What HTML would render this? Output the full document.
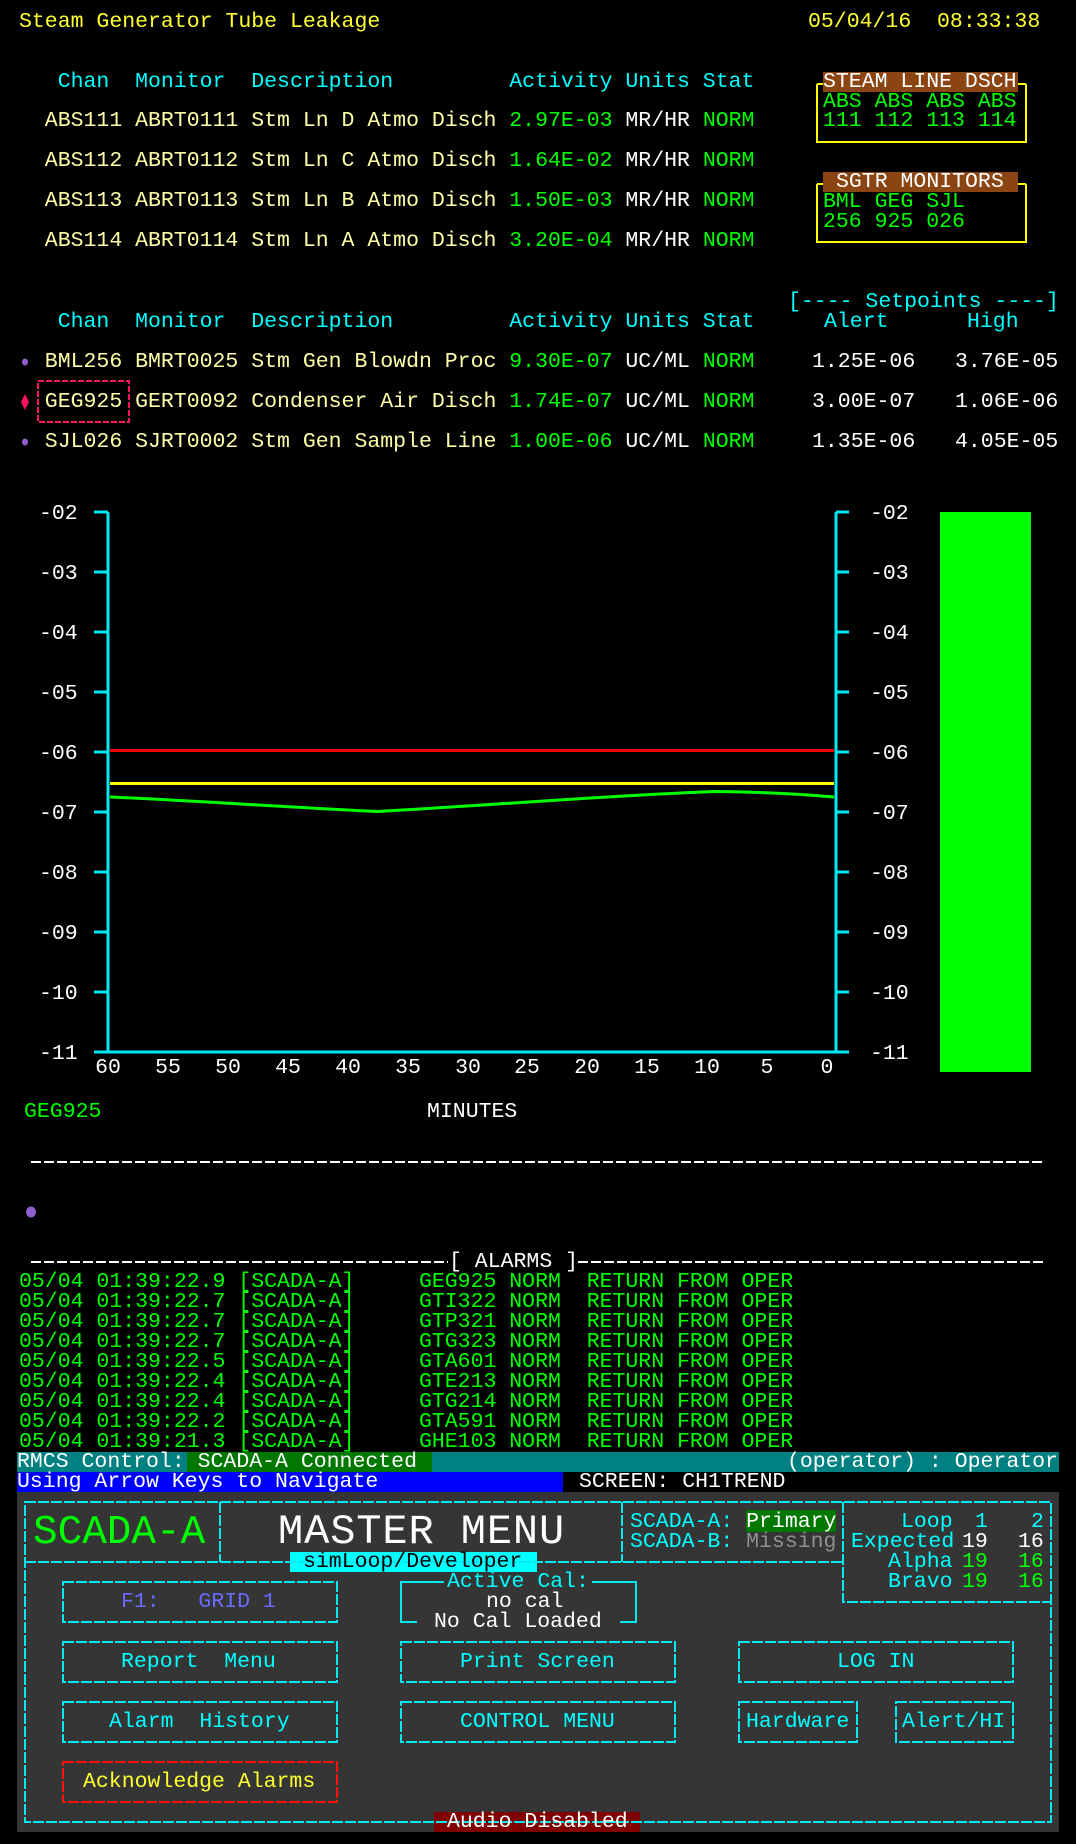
<!DOCTYPE html>
<html><head><meta charset="utf-8"><style>
html,body{margin:0;padding:0;background:#000;}
body{width:1076px;height:1844px;position:relative;overflow:hidden;font-family:"Liberation Mono","DejaVu Sans Mono",monospace;}
.t{position:absolute;white-space:pre;font-size:21.5px;line-height:20px;height:20px;}
.y{color:#ffff30}.py{color:#ffffa8}.c{color:#00ffff}.g{color:#00ff00}.w{color:#ffffff}
svg{position:absolute;left:0;top:0;}
</style></head><body>
<div class="t y" style="left:19px;top:12px">Steam Generator Tube Leakage</div>
<div class="t y" style="left:808px;top:12px">05/04/16  08:33:38</div>

<div class="t c" style="left:19px;top:72px">   Chan  Monitor  Description         Activity Units Stat</div>
<div class="t" style="left:19px;top:111px"><span class="py">  ABS111 ABRT0111 Stm Ln D Atmo Disch </span><span class="g">2.97E-03 </span><span class="w">MR/HR </span><span class="g">NORM</span></div>
<div class="t" style="left:19px;top:151px"><span class="py">  ABS112 ABRT0112 Stm Ln C Atmo Disch </span><span class="g">1.64E-02 </span><span class="w">MR/HR </span><span class="g">NORM</span></div>
<div class="t" style="left:19px;top:191px"><span class="py">  ABS113 ABRT0113 Stm Ln B Atmo Disch </span><span class="g">1.50E-03 </span><span class="w">MR/HR </span><span class="g">NORM</span></div>
<div class="t" style="left:19px;top:231px"><span class="py">  ABS114 ABRT0114 Stm Ln A Atmo Disch </span><span class="g">3.20E-04 </span><span class="w">MR/HR </span><span class="g">NORM</span></div>

<div class="t c" style="left:788px;top:292px">[---- Setpoints ----]</div>
<div class="t c" style="left:19px;top:312px">   Chan  Monitor  Description         Activity Units Stat</div>
<div class="t c" style="left:824px;top:312px">Alert</div>
<div class="t c" style="left:967px;top:312px">High</div>
<div class="t" style="left:19px;top:352px"><span class="py">  BML256 BMRT0025 Stm Gen Blowdn Proc </span><span class="g">9.30E-07 </span><span class="w">UC/ML </span><span class="g">NORM</span></div>
<div class="t" style="left:19px;top:392px"><span class="py">  GEG925 GERT0092 Condenser Air Disch </span><span class="g">1.74E-07 </span><span class="w">UC/ML </span><span class="g">NORM</span></div>
<div class="t" style="left:19px;top:432px"><span class="py">  SJL026 SJRT0002 Stm Gen Sample Line </span><span class="g">1.00E-06 </span><span class="w">UC/ML </span><span class="g">NORM</span></div>
<div class="t w" style="left:812px;top:352px">1.25E-06</div><div class="t w" style="left:955px;top:352px">3.76E-05</div>
<div class="t w" style="left:812px;top:392px">3.00E-07</div><div class="t w" style="left:955px;top:392px">1.06E-06</div>
<div class="t w" style="left:812px;top:432px">1.35E-06</div><div class="t w" style="left:955px;top:432px">4.05E-05</div>

<div style="position:absolute;left:823px;top:72px;width:195px;height:20px;background:#8b4513"></div>
<div class="t w" style="left:823px;top:72px">STEAM LINE DSCH</div>
<div class="t g" style="left:823px;top:92px">ABS ABS ABS ABS</div>
<div class="t g" style="left:823px;top:111px">111 112 113 114</div>
<div style="position:absolute;left:823px;top:172px;width:195px;height:20px;background:#8b4513"></div>
<div class="t w" style="left:836px;top:172px">SGTR MONITORS</div>
<div class="t g" style="left:823px;top:192px">BML GEG SJL</div>
<div class="t g" style="left:823px;top:212px">256 925 026</div>

<svg width="1076" height="1844">
 <g fill="none" stroke="#ffff00" stroke-width="2">
  <path d="M817 84 V142 H1026 V84"/><path d="M817 84 h6 M1026 84 h-8"/>
  <path d="M817 184 V242 H1026 V184"/><path d="M817 184 h6 M1026 184 h-8"/>
 </g>
 <rect x="38" y="381" width="91" height="41" fill="none" stroke="#ff1060" stroke-width="2" stroke-dasharray="6 2"/>
 <polygon points="25,394 29,402 25,410 21,402" fill="#ff1060"/>
 <ellipse cx="25" cy="362" rx="3" ry="3.5" fill="#9060d0"/>
 <ellipse cx="25" cy="442" rx="3" ry="3.5" fill="#9060d0"/>
 <g stroke="#00e8f0" stroke-width="3" fill="none">
  <path d="M108 512 V1052 H849 M836 512 V1052"/>
  <path d="M94 512h14M94 572h14M94 632h14M94 692h14M94 752h14M94 812h14M94 872h14M94 932h14M94 992h14M94 1052h14"/>
  <path d="M836 512h13M836 572h13M836 632h13M836 692h13M836 752h13M836 812h13M836 872h13M836 932h13M836 992h13"/>
 </g>
 <line x1="110" y1="750.5" x2="834" y2="750.5" stroke="#ff0000" stroke-width="3"/>
 <line x1="110" y1="783.5" x2="834" y2="783.5" stroke="#ffff00" stroke-width="3"/>
 <path d="M110 797 C200 801 300 808 377 811.5 C480 806 600 796 714 791.5 C760 792 800 794 834 797" stroke="#00ff00" stroke-width="3" fill="none"/>
 <rect x="940" y="512" width="91" height="560" fill="#00ff00"/>
 <g font-family="Liberation Mono, monospace" font-size="21.5" fill="#fff">
  <text x="39" y="519">-02</text><text x="39" y="579">-03</text><text x="39" y="639">-04</text><text x="39" y="699">-05</text><text x="39" y="759">-06</text><text x="39" y="819">-07</text><text x="39" y="879">-08</text><text x="39" y="939">-09</text><text x="39" y="999">-10</text><text x="39" y="1059">-11</text>
  <text x="870" y="519">-02</text><text x="870" y="579">-03</text><text x="870" y="639">-04</text><text x="870" y="699">-05</text><text x="870" y="759">-06</text><text x="870" y="819">-07</text><text x="870" y="879">-08</text><text x="870" y="939">-09</text><text x="870" y="999">-10</text><text x="870" y="1059">-11</text>
  <g text-anchor="middle">
  <text x="108" y="1073">60</text><text x="168" y="1073">55</text><text x="228" y="1073">50</text><text x="288" y="1073">45</text><text x="348" y="1073">40</text><text x="408" y="1073">35</text><text x="468" y="1073">30</text><text x="527" y="1073">25</text><text x="587" y="1073">20</text><text x="647" y="1073">15</text><text x="707" y="1073">10</text><text x="767" y="1073">5</text><text x="827" y="1073">0</text>
  </g>
 </g>
 <g stroke="#ffffff" stroke-width="2" stroke-dasharray="10 3">
  <line x1="31" y1="1162" x2="1043" y2="1162"/>
  <line x1="31" y1="1262" x2="448" y2="1262"/>
  <line x1="578" y1="1262" x2="1043" y2="1262"/>
 </g>
 <ellipse cx="31" cy="1212" rx="5" ry="5.5" fill="#9060d0"/>
</svg>

<div class="t g" style="left:24px;top:1102px">GEG925</div>
<div class="t w" style="left:427px;top:1102px">MINUTES</div>
<div class="t w" style="left:449px;top:1252px">[ ALARMS ]</div>
<div class="t g" style="left:19px;top:1272px;height:auto">05/04 01:39:22.9 [SCADA-A]     GEG925 NORM  RETURN FROM OPER
05/04 01:39:22.7 [SCADA-A]     GTI322 NORM  RETURN FROM OPER
05/04 01:39:22.7 [SCADA-A]     GTP321 NORM  RETURN FROM OPER
05/04 01:39:22.7 [SCADA-A]     GTG323 NORM  RETURN FROM OPER
05/04 01:39:22.5 [SCADA-A]     GTA601 NORM  RETURN FROM OPER
05/04 01:39:22.4 [SCADA-A]     GTE213 NORM  RETURN FROM OPER
05/04 01:39:22.4 [SCADA-A]     GTG214 NORM  RETURN FROM OPER
05/04 01:39:22.2 [SCADA-A]     GTA591 NORM  RETURN FROM OPER
05/04 01:39:21.3 [SCADA-A]     GHE103 NORM  RETURN FROM OPER</div>

<div style="position:absolute;left:17px;top:1452px;width:1042px;height:20px;background:#008080"></div>
<div style="position:absolute;left:187px;top:1452px;width:245px;height:20px;background:#007800"></div>
<div class="t w" style="left:17px;top:1452px">RMCS Control: SCADA-A Connected</div>
<div class="t w" style="left:787px;top:1452px">(operator) : Operator</div>
<div style="position:absolute;left:17px;top:1472px;width:546px;height:20px;background:#0000ff"></div>
<div class="t w" style="left:17px;top:1472px">Using Arrow Keys to Navigate</div>
<div class="t w" style="left:579px;top:1472px">SCREEN: CH1TREND</div>
<div style="position:absolute;left:17px;top:1492px;width:1042px;height:340px;background:#353535"></div>

<div style="position:absolute;left:290px;top:1552px;width:247px;height:20px;background:#00ffff"></div>
<div style="position:absolute;left:746px;top:1510px;width:90px;height:22px;background:#007800"></div>
<div style="position:absolute;left:434px;top:1812px;width:206px;height:20px;background:#800000"></div>

<svg width="1076" height="1844">
 <g fill="none" stroke="#00e8f0" stroke-width="2" stroke-dasharray="11 2">
  <rect x="25" y="1502" width="1026" height="320"/>
  <line x1="25" y1="1562" x2="843" y2="1562"/>
  <line x1="220" y1="1502" x2="220" y2="1562"/>
  <line x1="622" y1="1502" x2="622" y2="1562"/>
  <path d="M843 1502 V1602 H1051"/>
  <rect x="63" y="1582" width="274" height="40"/>
  <rect x="63" y="1642" width="274" height="40"/>
  <rect x="401" y="1642" width="274" height="40"/>
  <rect x="739" y="1642" width="274" height="40"/>
  <rect x="63" y="1702" width="274" height="40"/>
  <rect x="401" y="1702" width="274" height="40"/>
  <rect x="739" y="1702" width="118" height="40"/>
  <rect x="896" y="1702" width="117" height="40"/>
 </g>
 <g fill="none" stroke="#00e8f0" stroke-width="2">
  <path d="M417 1622 H401 V1582 H444 M592 1582 H636 V1622 H620"/>
 </g>
 <rect x="63" y="1762" width="274" height="40" fill="none" stroke="#ff1010" stroke-width="2" stroke-dasharray="11 2"/>
</svg>

<div class="t g" style="left:33px;top:1516px;font-size:41px;line-height:34px;height:34px">SCADA-A</div>
<div class="t w" style="left:278px;top:1515px;font-size:42px;line-height:34px;height:34px;letter-spacing:0.9px">MASTER MENU</div>
<div class="t" style="left:303px;top:1552px;color:#000">simLoop/Developer</div>
<div class="t c" style="left:630px;top:1512px">SCADA-A: <span class="w">Primary</span></div>
<div class="t c" style="left:630px;top:1532px">SCADA-B: <span style="color:#909090">Missing</span></div>
<div class="t c" style="left:901px;top:1512px">Loop</div><div class="t c" style="left:975px;top:1512px">1</div><div class="t c" style="left:1031px;top:1512px">2</div>
<div class="t c" style="left:851px;top:1532px">Expected</div><div class="t w" style="left:962px;top:1532px">19</div><div class="t w" style="left:1018px;top:1532px">16</div>
<div class="t c" style="left:888px;top:1552px">Alpha</div><div class="t g" style="left:962px;top:1552px">19</div><div class="t g" style="left:1018px;top:1552px">16</div>
<div class="t c" style="left:888px;top:1572px">Bravo</div><div class="t g" style="left:962px;top:1572px">19</div><div class="t g" style="left:1018px;top:1572px">16</div>

<div class="t" style="left:121px;top:1592px;color:#6a6aff">F1:   GRID 1</div>
<div class="t c" style="left:447px;top:1572px">Active Cal:</div>
<div class="t w" style="left:486px;top:1592px">no cal</div>
<div class="t w" style="left:434px;top:1612px">No Cal Loaded</div>
<div class="t c" style="left:121px;top:1652px">Report  Menu</div>
<div class="t c" style="left:460px;top:1652px">Print Screen</div>
<div class="t c" style="left:837px;top:1652px">LOG IN</div>
<div class="t c" style="left:109px;top:1712px">Alarm  History</div>
<div class="t c" style="left:460px;top:1712px">CONTROL MENU</div>
<div class="t c" style="left:746px;top:1712px">Hardware</div>
<div class="t c" style="left:902px;top:1712px">Alert/HI</div>
<div class="t y" style="left:83px;top:1772px">Acknowledge Alarms</div>
<div class="t w" style="left:447px;top:1812px">Audio Disabled</div>
</body></html>
